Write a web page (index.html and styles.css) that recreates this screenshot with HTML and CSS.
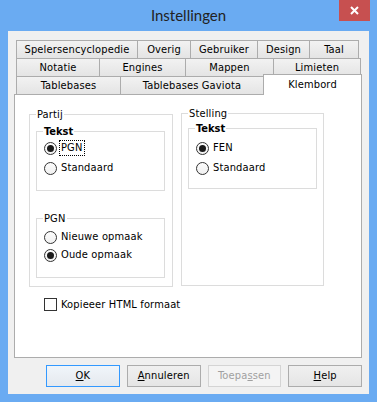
FILE: index.html
```html
<!DOCTYPE html>
<html>
<head>
<meta charset="utf-8">
<link rel="stylesheet" href="styles.css">
</head>
<body>
<div class="window">
  <div class="titlebar">
    <span class="title">Instellingen</span>
    <span class="close"><svg width="9" height="9" viewBox="0 0 9 9"><path d="M1 1 L8 8 M8 1 L1 8" stroke="#fff" stroke-width="2" fill="none"/></svg></span>
  </div>
  <div class="client">
    <div class="tabs">
      <div class="tabrow">
        <div class="tab w121">Spelersencyclopedie</div>
        <div class="tab w53">Overig</div>
        <div class="tab w67">Gebruiker</div>
        <div class="tab w52">Design</div>
        <div class="tab w50 last">Taal</div>
      </div>
      <div class="tabrow">
        <div class="tab w83">Notatie</div>
        <div class="tab w86">Engines</div>
        <div class="tab w88">Mappen</div>
        <div class="tab w88 last">Limieten</div>
      </div>
      <div class="tabrow">
        <div class="tab w104">Tablebases</div>
        <div class="tab w143">Tablebases Gaviota</div>
        <div class="tab sel">Klembord</div>
      </div>
    </div>
    <div class="page">
      <div class="groups">
        <fieldset class="group partij">
          <legend>Partij</legend>
          <fieldset class="group inner tekst-p">
            <legend class="bold">Tekst</legend>
            <div class="opt"><span class="radio on"></span><span class="lbl focus">PGN</span></div>
            <div class="opt"><span class="radio"></span><span class="lbl">Standaard</span></div>
          </fieldset>
          <fieldset class="group inner pgn">
            <legend>PGN</legend>
            <div class="opt s18"><span class="radio"></span><span class="lbl">Nieuwe opmaak</span></div>
            <div class="opt s18"><span class="radio on"></span><span class="lbl">Oude opmaak</span></div>
          </fieldset>
        </fieldset>
        <fieldset class="group stelling">
          <legend>Stelling</legend>
          <fieldset class="group inner tekst-s">
            <legend class="bold">Tekst</legend>
            <div class="opt"><span class="radio on"></span><span class="lbl">FEN</span></div>
            <div class="opt"><span class="radio"></span><span class="lbl">Standaard</span></div>
          </fieldset>
        </fieldset>
      </div>
      <div class="checkrow"><span class="check"></span><span class="lbl">Kopieeer HTML formaat</span></div>
    </div>
    <div class="buttons">
      <button class="btn default"><u>O</u>K</button>
      <button class="btn"><u>A</u>nnuleren</button>
      <button class="btn disabled">Toepa<u>s</u>sen</button>
      <button class="btn"><u>H</u>elp</button>
    </div>
  </div>
</div>
</body>
</html>
```
FILE: styles.css
```css
html, body {
  margin: 0;
  padding: 0;
}
body {
  width: 377px;
  height: 402px;
  overflow: hidden;
  background: #6aabf2;
  font-family: "DejaVu Sans Condensed", "DejaVu Sans", sans-serif;
  font-stretch: condensed;
  font-size: 11px;
  letter-spacing: 0.15px;
  color: #000;
}
.window {
  display: flex;
  flex-direction: column;
  height: 402px;
}
.titlebar {
  height: 31px;
  display: grid;
  grid-template-columns: 1fr auto 1fr;
  align-items: start;
}
.title {
  grid-column: 2;
  font-family: Lato, "Noto Sans", sans-serif;
  font-stretch: normal;
  letter-spacing: 0;
  font-size: 15px;
  line-height: 31px;
  color: #222;
}
.close {
  grid-column: 3;
  justify-self: end;
  margin-right: 7px;
  width: 31px;
  height: 21px;
  background: #c75050;
  display: flex;
  align-items: center;
  justify-content: center;
}
.client {
  margin: 0 8px;
  height: 363px;
  box-sizing: border-box;
  background: #f0f0f0;
  padding: 9px 7px 0 6px;
}
.tabs {
  margin-left: 2px;
}
.tabrow {
  display: flex;
  height: 18px;
}
.tab {
  box-sizing: border-box;
  height: 18px;
  border-left: 1px solid #acacac;
  border-top: 1px solid #acacac;
  background: linear-gradient(#f2f2f2, #e4e4e4);
  text-align: center;
  padding-top: 1px;
  line-height: 16px;
  white-space: nowrap;
}
.tab.last {
  border-right: 1px solid #acacac;
}
.w121 { width: 121px; }
.w53 { width: 53px; }
.w67 { width: 67px; }
.w52 { width: 52px; }
.w50 { width: 50px; }
.w83 { width: 83px; }
.w86 { width: 86px; }
.w88 { width: 88px; }
.w104 { width: 104px; }
.w143 { width: 143px; }
.tab.sel {
  width: 99px;
  height: 21px;
  margin-top: -2px;
  background: #fff;
  border-right: 1px solid #acacac;
  position: relative;
  z-index: 1;
  padding-top: 0;
  line-height: 19px;
}
.page {
  box-sizing: border-box;
  width: 348px;
  height: 264px;
  background: #fff;
  border: 1px solid #acacac;
}
.groups {
  display: flex;
  align-items: stretch;
  gap: 8px;
  margin: 13px 0 0 14px;
}
fieldset.group {
  box-sizing: border-box;
  margin: 0;
  min-width: 0;
  border: 1px solid #dcdcdc;
  padding: 0 7px 8px 6px;
}
legend {
  padding: 0 1px;
  line-height: 13px;
}
legend.bold {
  font-weight: bold;
  letter-spacing: 0;
}
.partij {
  width: 144px;
  padding-top: 4px !important;
}
.stelling {
  width: 143px;
  margin: -1px 0 1px 0 !important;
  padding: 2px 6px 0 6px !important;
}
fieldset.inner {
  padding: 0 6px 12px 6px;
}
.tekst-p {
  padding-bottom: 12px !important;
}
.tekst-s {
  padding-top: 3px !important;
  padding-bottom: 10px !important;
}
.pgn {
  margin-top: 21px !important;
  padding-top: 3px !important;
  padding-bottom: 13px !important;
}
.opt {
  display: flex;
  align-items: center;
  height: 20px;
  margin-left: 1px;
}
.opt.s18 {
  height: 18px;
}
.radio {
  box-sizing: border-box;
  width: 13px;
  height: 13px;
  flex: none;
  border: 1px solid #333;
  border-radius: 50%;
  background: linear-gradient(#fcfcfc, #f0f0f0);
  display: flex;
  align-items: center;
  justify-content: center;
}
.radio.on::after {
  content: "";
  width: 7px;
  height: 7px;
  border-radius: 50%;
  background: #1a1a1a;
}
.lbl {
  margin-left: 2px;
  border: 1px dotted transparent;
  padding: 0 1px;
  line-height: 14px;
  white-space: nowrap;
}
.lbl.focus {
  border-color: #000;
}
.checkrow {
  display: flex;
  align-items: center;
  height: 17px;
  margin: 9px 0 0 29px;
}
.check {
  box-sizing: border-box;
  width: 13px;
  height: 13px;
  flex: none;
  border: 1px solid #333;
  background: #fff;
}
.buttons {
  display: flex;
  gap: 7px;
  margin: 7px 0 0 32px;
}
.btn {
  box-sizing: border-box;
  width: 74px;
  height: 22px;
  margin: 0;
  padding: 0;
  border: 1px solid #acacac;
  background: linear-gradient(#f0f0f0, #e5e5e5);
  font: inherit;
  letter-spacing: inherit;
  color: #000;
  text-align: center;
  line-height: 20px;
}
.btn u {
  text-underline-offset: 1px;
}
.btn.default {
  border-color: #3399ff;
  background: linear-gradient(#f0f5fa, #e5e9ee);
}
.btn.disabled {
  border-color: #d4d4d4;
  background: #f4f4f4;
  color: #a0a0a0;
}
```
